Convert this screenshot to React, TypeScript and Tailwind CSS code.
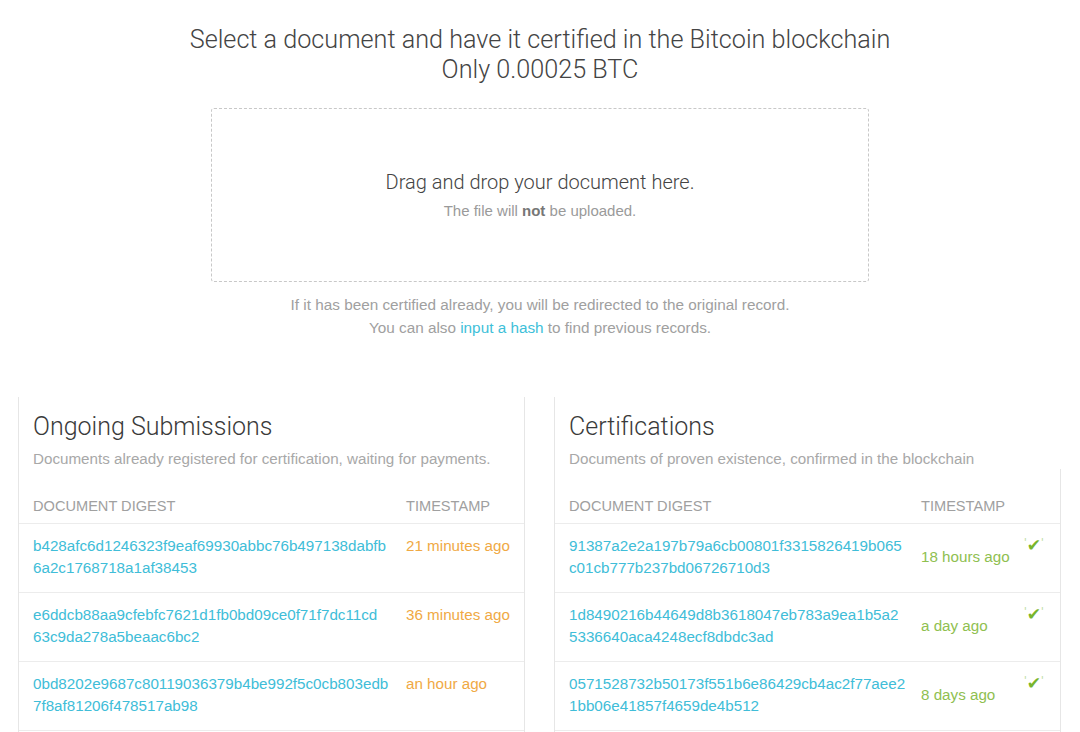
import React from 'react';

const ongoing = [
  { a: 'b428afc6d1246323f9eaf69930abbc76b497138dabfb', b: '6a2c1768718a1af38453', t: '21 minutes ago' },
  { a: 'e6ddcb88aa9cfebfc7621d1fb0bd09ce0f71f7dc11cd', b: '63c9da278a5beaac6bc2', t: '36 minutes ago' },
  { a: '0bd8202e9687c80119036379b4be992f5c0cb803edb', b: '7f8af81206f478517ab98', t: 'an hour ago' },
];

const certified = [
  { a: '91387a2e2a197b79a6cb00801f3315826419b065', b: 'c01cb777b237bd06726710d3', t: '18 hours ago' },
  { a: '1d8490216b44649d8b3618047eb783a9ea1b5a2', b: '5336640aca4248ecf8dbdc3ad', t: 'a day ago' },
  { a: '0571528732b50173f551b6e86429cb4ac2f77aee2', b: '1bb06e41857f4659de4b512', t: '8 days ago' },
];

const PanelHead: React.FC<{ title: string; sub: string }> = ({ title, sub }) => (
  <div className="px-[14px] pt-[14px]">
    <h2 className="font-['Roboto',sans-serif] text-[25px] font-light leading-[32px] text-[#3a3a3a]">{title}</h2>
    <p className="mt-[6px] text-[15.2px] leading-[20px] text-[#a8a8a8]">{sub}</p>
  </div>
);

export default function App() {
  return (
    <div className="min-h-[732px] w-[1080px] overflow-hidden bg-white font-['Liberation_Sans',Arial,sans-serif]">
      <header className="pt-[25px] text-center font-['Roboto',sans-serif] text-[25.2px] font-light leading-[30px] text-[#444]">
        <p>Select a document and have it certified in the Bitcoin blockchain</p>
        <p>Only 0.00025 BTC</p>
      </header>

      <div className="mx-auto mt-[23px] flex h-[174px] w-[658px] flex-col items-center justify-center rounded-[3px] border border-dashed border-[#c8c8c8]">
        <p className="font-['Roboto',sans-serif] text-[20px] font-light leading-[24px] text-[#444]">
          Drag and drop your document here.
        </p>
        <p className="mt-[7px] text-[15px] leading-[20px] text-[#9a9a9a]">
          The file will <span className="font-bold text-[#777]">not</span> be uploaded.
        </p>
      </div>

      <div className="mt-[11px] text-center text-[15.3px] leading-[23px] text-[#a0a0a0]">
        <p>If it has been certified already, you will be redirected to the original record.</p>
        <p>
          You can also <span className="text-[#3ebfd9]">input a hash</span> to find previous records.
        </p>
      </div>

      <div className="mt-[58px] flex justify-center gap-[29px] pr-[1px]">
        <section className="w-[507px] border-x border-[#e6e6e6]">
          <PanelHead title="Ongoing Submissions" sub="Documents already registered for certification, waiting for payments." />
          <div className="grid grid-cols-[373px_1fr] px-[14px] pt-[27px] pb-[7px] text-[14.6px] leading-[20px] text-[#a0a0a0]">
            <span>DOCUMENT DIGEST</span>
            <span>TIMESTAMP</span>
          </div>
          {ongoing.map((r) => (
            <div key={r.a} className="grid grid-cols-[373px_1fr] border-t border-[#ececec] px-[14px] pt-[11px] pb-[13px] text-[15.2px] leading-[22px]">
              <div className="text-[#40bdd8]">
                <div>{r.a}</div>
                <div>{r.b}</div>
              </div>
              <div className="whitespace-nowrap text-[#f0a944]">{r.t}</div>
            </div>
          ))}
          <div className="h-[10px] border-t border-[#ececec]" />
        </section>

        <section className="w-[507px] border-l border-[#e6e6e6]">
          <PanelHead title="Certifications" sub="Documents of proven existence, confirmed in the blockchain" />
          <div className="border-r border-[#e6e6e6]">
            <div className="grid grid-cols-[352px_1fr] px-[14px] pt-[27px] pb-[7px] text-[14.6px] leading-[20px] text-[#a0a0a0]">
              <span>DOCUMENT DIGEST</span>
              <span>TIMESTAMP</span>
            </div>
            {certified.map((r) => (
              <div key={r.a} className="grid grid-cols-[352px_1fr_26px] border-t border-[#ececec] px-[14px] pt-[11px] pb-[13px] text-[15.2px] leading-[22px]">
                <div className="text-[#40bdd8]">
                  <div>{r.a}</div>
                  <div>{r.b}</div>
                </div>
                <div className="self-center whitespace-nowrap text-[#8fc050]">{r.t}</div>
                <div className="ml-[4px] flex items-start pt-[1px] font-['DejaVu_Sans',sans-serif] text-[#78b52c]">
                  <span className="text-[10px] leading-[14px] text-[#b9d98f]">'</span>
                  <span className="text-[17px] leading-[18px]">✔</span>
                  <span className="text-[10px] leading-[14px] text-[#b9d98f]">'</span>
                </div>
              </div>
            ))}
            <div className="h-[10px] border-t border-[#ececec]" />
          </div>
        </section>
      </div>
    </div>
  );
}
